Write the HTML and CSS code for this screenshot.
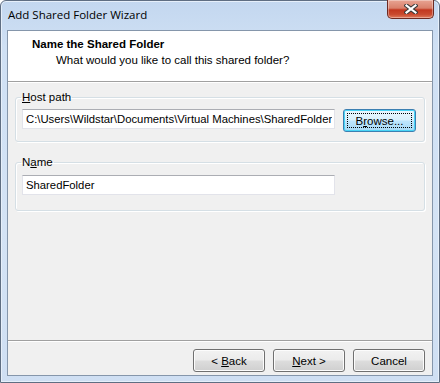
FILE: index.html
```html
<!DOCTYPE html>
<html lang="en">
<head>
  <meta charset="UTF-8" />
  <title>Add Shared Folder Wizard</title>
  <link rel="stylesheet" href="styles.css">
</head>
<body>

<div class="window">
  <div class="titlebar">
    <span class="title">Add Shared Folder Wizard</span>
    <button class="close" title="Close">
      <svg width="14" height="10" viewBox="0 0 14 10">
        <path d="M2.5 1.5 L11.5 8.5 M11.5 1.5 L2.5 8.5" stroke="#3a3a3a" stroke-width="4.2" stroke-linecap="square"/>
        <path d="M2.5 1.5 L11.5 8.5 M11.5 1.5 L2.5 8.5" stroke="#ffffff" stroke-width="2.2" stroke-linecap="square"/>
      </svg>
    </button>
  </div>

  <div class="client">
    <div class="header">
      <div class="header-title">Name the Shared Folder</div>
      <div class="header-sub">What would you like to call this shared folder?</div>
    </div>
    <div class="etched"></div>

    <div class="body">
      <fieldset class="group group-host">
        <legend><u>H</u>ost path</legend>
        <div class="row">
          <input class="field" type="text" value="C:\Users\Wildstar\Documents\Virtual Machines\SharedFolder">
          <button class="btn btn-focus"><span class="focus-ring">B<u>r</u>owse...</span></button>
        </div>
      </fieldset>

      <fieldset class="group group-name">
        <legend>N<u>a</u>me</legend>
        <div class="row">
          <input class="field" type="text" value="SharedFolder">
        </div>
      </fieldset>
    </div>

    <div class="etched"></div>
    <div class="footer">
      <button class="btn">&lt; <u>B</u>ack</button>
      <button class="btn"><u>N</u>ext &gt;</button>
      <button class="btn">Cancel</button>
    </div>
  </div>
</div>

</body>
</html>
```

FILE: styles.css
```css
* {
  box-sizing: border-box;
}
body {
  margin: 0;
  font-family: "Liberation Sans", Arial, sans-serif;
  font-size: 11.5px;
  color: #000;
  background: #fff;
}
.window {
  width: 440px;
  height: 383px;
  border: 1px solid #5f6e82;
  border-radius: 6px 6px 0 0;
  background: linear-gradient(180deg, #c3d7ef 0%, #cfe0f4 12%, #d4e3f5 60%, #cfdff3 100%);
  display: flex;
  flex-direction: column;
  box-shadow: inset 0 0 0 1px #e6effa;
}
.titlebar {
  height: 29px;
  display: flex;
  justify-content: space-between;
  align-items: flex-start;
  padding-left: 7px;
}
.title {
  font-family: "Open Sans", "Noto Sans", sans-serif;
  font-size: 11.5px;
  line-height: 16px;
  margin-top: 6px;
  color: #000;
}
.close {
  width: 47px;
  height: 19px;
  margin: -1px 5px 0 0;
  padding: 0;
  border: 1px solid #6d2a22;
  border-top: none;
  border-radius: 0 0 5px 5px;
  background: linear-gradient(180deg, #e8a493 0%, #d9806b 45%, #c2371f 55%, #c94a2f 80%, #e07a5c 100%);
  box-shadow: inset 0 0 0 1px rgba(255,255,255,0.35);
  display: flex;
  align-items: center;
  justify-content: center;
}
.client {
  flex: 1;
  margin: 0 6px 6px 6px;
  border: 1px solid #8596ab;
  background: #f0f0f0;
  display: flex;
  flex-direction: column;
}
.header {
  height: 50px;
  background: #fff;
  padding: 7px 0 0 24px;
}
.header-title {
  font-weight: bold;
  line-height: 13px;
}
.header-sub {
  line-height: 13px;
  margin-top: 3px;
  padding-left: 24px;
}
.etched {
  height: 2px;
  border-top: 1px solid #a0a0a0;
  border-bottom: 1px solid #fff;
}
.body {
  flex: 1;
  padding: 8px 7px 0 7px;
}
.group {
  margin: 0;
  border: 1px solid #d5dfe5;
  border-radius: 3px;
  padding: 5px 6px 9px 6px;
  box-shadow: inset 1px 1px 0 #fff, 1px 1px 0 #fff;
}
.group legend {
  padding: 0 1px;
  margin-left: -1px;
  line-height: 13px;
}
.group-name {
  margin-top: 14px;
  padding-top: 6px;
  padding-bottom: 15px;
}
.row {
  display: flex;
  align-items: flex-start;
  gap: 8px;
}
.field {
  width: 313px;
  height: 20px;
  margin: 0;
  padding: 0 2px 0 3px;
  border: 1px solid #e2e3ea;
  border-top-color: #abadb3;
  font-family: "Liberation Sans", Arial, sans-serif;
  font-size: 11.3px;
  color: #000;
  background: #fff;
  outline: none;
}
.btn {
  width: 72px;
  height: 23px;
  margin: 0;
  padding: 0;
  border: 1px solid #707070;
  border-radius: 3px;
  background: linear-gradient(180deg, #f2f2f2 0%, #ebebeb 48%, #dddddd 52%, #cfcfcf 100%);
  box-shadow: inset 0 0 0 1px #fcfcfc;
  font-family: "Liberation Sans", Arial, sans-serif;
  font-size: 11.5px;
  color: #000;
  cursor: pointer;
}
.btn-focus {
  width: 73px;
  border-color: #3c7fb1;
  background: linear-gradient(180deg, #eaf6fd 0%, #d9f0fc 48%, #bee6fd 52%, #a7d9f5 100%);
  box-shadow: inset 0 0 0 1px #48d4f5;
  padding: 3px;
}
.focus-ring {
  display: flex;
  height: 100%;
  align-items: center;
  justify-content: center;
  border: 1px dotted #000;
}
.footer {
  height: 33px;
  padding: 7px 7px 0 0;
  display: flex;
  justify-content: flex-end;
  align-items: flex-start;
  gap: 8px;
}
```
